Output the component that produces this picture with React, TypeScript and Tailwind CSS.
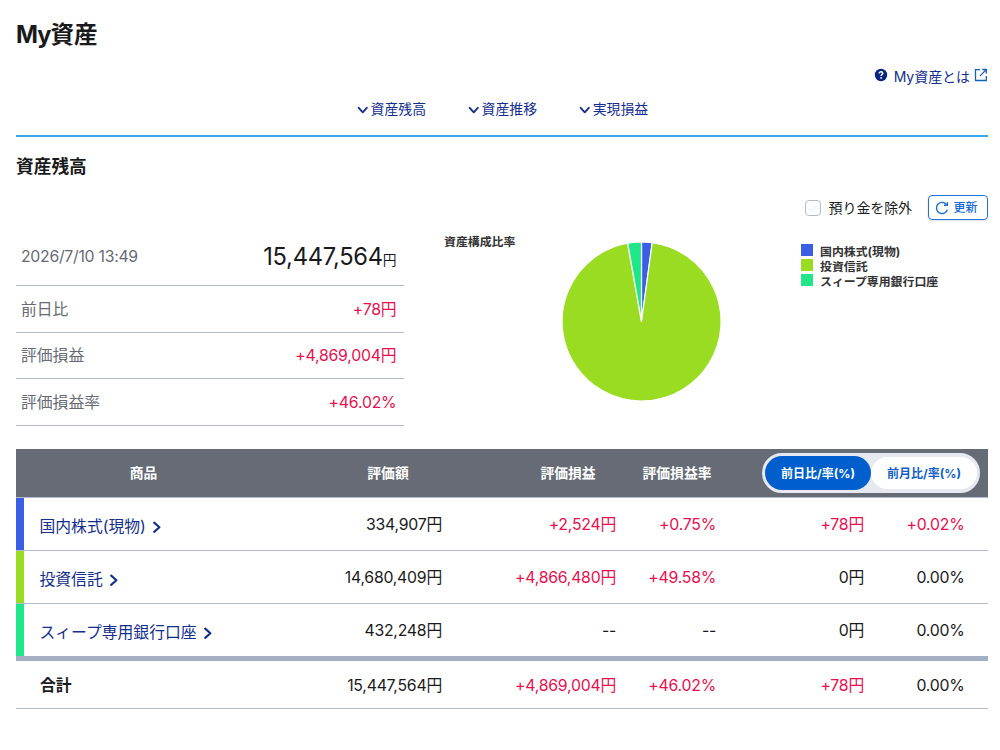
import { useState } from "react";

const rows = [
  {
    name: "国内株式(現物)",
    bar: "bg-[#3a5fe5]",
    value: "334,907円",
    profit: "+2,524円",
    rate: "+0.75%",
    diff: "+78円",
    diffRate: "+0.02%",
  },
  {
    name: "投資信託",
    bar: "bg-[#9adc22]",
    value: "14,680,409円",
    profit: "+4,866,480円",
    rate: "+49.58%",
    diff: "0円",
    diffRate: "0.00%",
  },
  {
    name: "スィープ専用銀行口座",
    bar: "bg-[#20e68a]",
    value: "432,248円",
    profit: "--",
    rate: "--",
    diff: "0円",
    diffRate: "0.00%",
  },
];

const total = {
  value: "15,447,564円",
  profit: "+4,869,004円",
  rate: "+46.02%",
  diff: "+78円",
  diffRate: "0.00%",
};

const summary = [
  { label: "前日比", value: "+78円" },
  { label: "評価損益", value: "+4,869,004円" },
  { label: "評価損益率", value: "+46.02%" },
];

const cols = "grid grid-cols-[255px_234px_126px_92px_149px_116px]";

const color = (text: string) =>
  text.startsWith("+") ? "text-[#e6104f]" : "text-[#1a1a1c]";

function Chevron({ className }: { className?: string }) {
  return (
    <svg
      viewBox="0 0 10 12"
      className={className}
      fill="none"
      stroke="currentColor"
      strokeWidth="2.1"
      strokeLinecap="round"
      strokeLinejoin="round"
    >
      <path d="M2.2 1.4 L7.4 6 L2.2 10.6" />
    </svg>
  );
}

function Amounts({ row }: { row: typeof total }) {
  const cell = "pt-[2px] text-right tracking-[-0.22px]";

  return (
    <>
      <div className={`${cell} pr-[63px]`}>{row.value}</div>
      <div className={`${cell} pr-[15px] ${color(row.profit)}`}>{row.profit}</div>
      <div className={`${cell} pr-[7px] ${color(row.rate)}`}>{row.rate}</div>
      <div className={`${cell} pr-2 ${color(row.diff)}`}>{row.diff}</div>
      <div className={`${cell} pr-[23.5px] ${color(row.diffRate)}`}>{row.diffRate}</div>
    </>
  );
}

export default function App() {
  const [excluded, setExcluded] = useState(false);
  const [mode, setMode] = useState("day");

  const tab = (active: boolean) =>
    active ? "bg-[#005fcc] text-white" : "bg-white text-[#0f60c4]";

  return (
    <div className="h-[750px] w-[1000px] overflow-hidden bg-white pr-3 pl-4 font-['Inter','Noto_Sans_CJK_JP',sans-serif] text-[15.8px] text-[#1a1a1c]">
      <h1 className="h-[67px] pt-[18px] text-[23.6px] leading-[34px] font-bold">
        <span className="tracking-[-1px]">My</span>資産
      </h1>

      <div className="flex h-[18px] items-center justify-end text-[14px] text-[#142e8c]">
        <svg viewBox="0 0 14 14" className="mr-[6px] -mt-[2px] size-[14px]">
          <circle cx="7" cy="7" r="6.2" fill="#0a2480" />
          <path
            d="M5.2 5.6 C5.2 4.4 6 3.8 7 3.8 C8 3.8 8.8 4.4 8.8 5.3 C8.8 6.5 7.1 6.4 7.1 7.9"
            fill="none"
            stroke="white"
            strokeWidth="1.4"
          />
          <circle cx="7.1" cy="9.9" r="0.9" fill="white" />
        </svg>
        <a className="tracking-[-0.05px]">My資産とは</a>
        <svg
          viewBox="0 0 14 14"
          className="-mt-[2px] ml-1 size-[14px] text-[#1461b8]"
          fill="none"
          stroke="currentColor"
          strokeWidth="1.3"
        >
          <path d="M6 1.7 H1.5 V12.5 H12.3 V8" />
          <path d="M8.3 1.5 H12.4 V5.6 M12.2 1.7 L6 7.9" />
        </svg>
      </div>

      <nav className="flex h-[52px] items-center gap-[43px] border-b-2 border-[#3fa5ea] pb-[2px] pl-[342px] text-[13.9px] text-[#142e8c]">
        {["資産残高", "資産推移", "実現損益"].map((item) => (
          <a key={item} className="flex items-center gap-[3px] leading-5">
            <Chevron className="mt-[2px] h-[10.5px] w-[9.5px] rotate-90" />
            {item}
          </a>
        ))}
      </nav>

      <h2 className="flex h-[58px] items-center pt-[2px] text-[17.7px] font-bold">資産残高</h2>

      <div className="flex h-[25px] items-center justify-end">
        <label className="flex items-center text-[14px] tracking-[-0.1px]">
          <button
            onClick={() => setExcluded(!excluded)}
            className="mr-2 flex size-4 items-center justify-center rounded-[4px] border border-[#b1bbcd]"
          >
            <svg viewBox="0 0 12 12" className="size-3" fill="none" stroke={excluded ? "#005fcc" : "#eaf5fc"} strokeWidth="1.5">
              <path d="M1.5 6.5 L4.5 9 L10.5 3" />
            </svg>
          </button>
          <span className="-mt-px">預り金を除外</span>
        </label>
        <button className="ml-4 flex h-[25px] w-[60px] items-center justify-center gap-1 rounded-[4px] border-[1.5px] border-[#2372d9] pr-[3px] text-[12px] font-medium text-[#146ad8] shadow-sm">
          <svg viewBox="0 0 14 14" className="size-[14px]" fill="none" stroke="currentColor" strokeWidth="1.4">
            <path d="M12.4 8.6 A5.6 5.6 0 1 1 11.2 3.2" />
            <path d="M12.3 1.2 V4.3 H9" />
          </svg>
          <span className="pt-px">更新</span>
        </button>
      </div>

      <div className="flex h-[229px]">
        <div className="w-[388.4px] pt-2">
          <div className="flex h-[58px] items-center justify-between border-b border-[#b1bbcd] pr-2 pl-[5px]">
            <span className="pt-px tracking-[-0.27px] text-[#666b75]">2026/7/10 13:49</span>
            <span className="text-[23.7px] tracking-[-0.25px]">
              15,447,564<span className="text-[13.8px]">円</span>
            </span>
          </div>
          {summary.map((item) => (
            <div
              key={item.label}
              className="flex h-[46.5px] items-center justify-between border-b border-[#b1bbcd] pt-[2px] pr-2 pl-[5px]"
            >
              <span className="text-[#666b75]">{item.label}</span>
              <span className="tracking-[-0.2px] text-[#e6104f]">{item.value}</span>
            </div>
          ))}
        </div>

        <div className="flex flex-1 pl-[39.6px] text-[11.9px] font-bold text-[#333]">
          <div className="w-[118px] pt-[13px] leading-[18px]">資産構成比率</div>
          <svg viewBox="0 0 160 160" className="mt-[21px] size-[160px] shrink-0">
            <g stroke="white" strokeWidth="1.2" strokeLinejoin="bevel">
              <path d="M79.5 80.5 L79.5 1 A79.5 79.5 0 0 1 90.2 1.7 Z" fill="#3a5fe5" />
              <path d="M79.5 80.5 L90.2 1.7 A79.5 79.5 0 1 1 65.7 2.2 Z" fill="#9adc22" />
              <path d="M79.5 80.5 L65.7 2.2 A79.5 79.5 0 0 1 79.5 1 Z" fill="#20e68a" />
            </g>
          </svg>
          <ul className="ml-[79px] pt-[23px]">
            {rows.map((row) => (
              <li key={row.name} className="flex h-[15px] items-center whitespace-nowrap">
                <span className={`-mt-[2px] mr-[7px] h-3 w-3 ${row.bar}`} />
                <span className="pt-[2px]">{row.name}</span>
              </li>
            ))}
          </ul>
        </div>
      </div>

      <div className={`${cols} h-[48px] items-center bg-[#666b75] text-center text-[13.8px] font-bold text-white`}>
        <div>商品</div>
        <div>評価額</div>
        <div>評価損益</div>
        <div>評価損益率</div>
        <div className="col-span-2 ml-[39px] flex h-10 w-[218px] items-center rounded-full border-[3px] border-[#e6e8f2] bg-[#e6e8f2] text-[12px]">
          <button
            onClick={() => setMode("day")}
            className={`h-[34px] w-[106px] rounded-full pt-px font-bold ${tab(mode === "day")}`}
          >
            前日比/率(%)
          </button>
          <button
            onClick={() => setMode("month")}
            className={`h-8 w-[106px] rounded-full pt-px font-bold ${tab(mode === "month")}`}
          >
            前月比/率(%)
          </button>
        </div>
      </div>

      <div className="border-t border-[#b1bbcd]">
        {rows.map((row) => (
          <div
            key={row.name}
            className={`${cols} h-[53px] items-center border-b border-[#b1bbcd] last:border-[#a5afc3]`}
          >
            <div className="flex h-full items-center">
              <span className={`h-full w-2 ${row.bar}`} />
              <a className="mt-[5px] ml-[15.5px] flex items-center gap-[6.5px] text-[#142e8c]">
                {row.name}
                <Chevron className="mt-px h-[12.5px] w-[10px]" />
              </a>
            </div>
            <Amounts row={row} />
          </div>
        ))}
      </div>

      <div className={`${cols} h-[52px] items-center border-t-[4px] border-b border-t-[#a5afc3] border-b-[#b1bbcd]`}>
        <div className="pt-[2px] pl-6 font-bold">合計</div>
        <Amounts row={total} />
      </div>
    </div>
  );
}
